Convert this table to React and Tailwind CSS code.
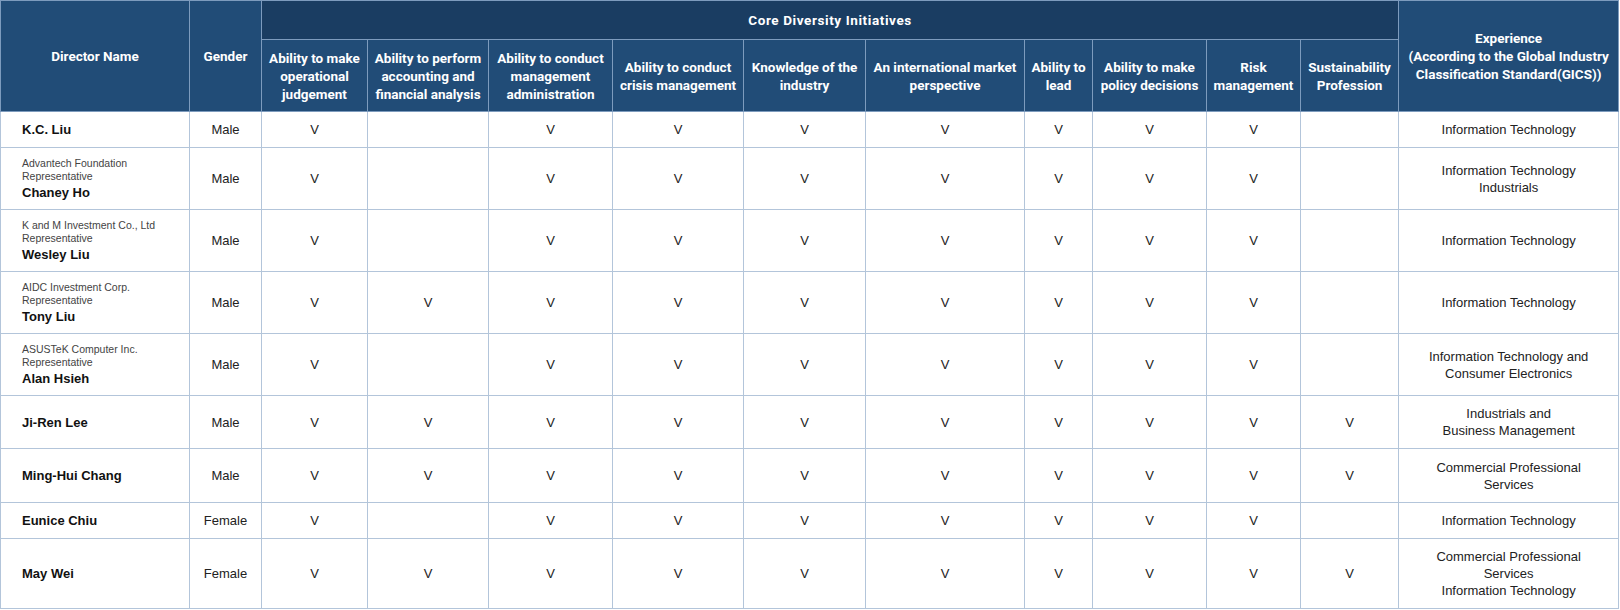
const skills = [
  'Ability to make operational judgement',
  'Ability to perform accounting and financial analysis',
  'Ability to conduct management administration',
  'Ability to conduct crisis management',
  'Knowledge of the industry',
  'An international market perspective',
  'Ability to lead',
  'Ability to make policy decisions',
  'Risk management',
  'Sustainability Profession',
];

const widths = ['w-[106px]', 'w-[121px]', 'w-[124px]', 'w-[131px]', 'w-[122px]', 'w-[159px]', 'w-[68px]', 'w-[114px]', 'w-[94px]', 'w-[98px]'];

const skillLabels = [
  ['Ability to make', 'operational', 'judgement'],
  ['Ability to perform', 'accounting and', 'financial analysis'],
  ['Ability to conduct', 'management', 'administration'],
  ['Ability to conduct', 'crisis management'],
  ['Knowledge of the', 'industry'],
  ['An international market', 'perspective'],
  ['Ability to', 'lead'],
  ['Ability to make', 'policy decisions'],
  ['Risk', 'management'],
  ['Sustainability', 'Profession'],
];

const directors = [
  { name: 'K.C. Liu', gender: 'Male', marks: [1, 0, 1, 1, 1, 1, 1, 1, 1, 0], exp: ['Information Technology'], h: 'h-[36px]' },
  { rep: ['Advantech Foundation', 'Representative'], name: 'Chaney Ho', gender: 'Male', marks: [1, 0, 1, 1, 1, 1, 1, 1, 1, 0], exp: ['Information Technology', 'Industrials'], h: 'h-[62px]' },
  { rep: ['K and M Investment Co., Ltd', 'Representative'], name: 'Wesley Liu', gender: 'Male', marks: [1, 0, 1, 1, 1, 1, 1, 1, 1, 0], exp: ['Information Technology'], h: 'h-[62px]' },
  { rep: ['AIDC Investment Corp.', 'Representative'], name: 'Tony Liu', gender: 'Male', marks: [1, 1, 1, 1, 1, 1, 1, 1, 1, 0], exp: ['Information Technology'], h: 'h-[62px]' },
  { rep: ['ASUSTeK Computer Inc.', 'Representative'], name: 'Alan Hsieh', gender: 'Male', marks: [1, 0, 1, 1, 1, 1, 1, 1, 1, 0], exp: ['Information Technology and', 'Consumer Electronics'], h: 'h-[62px]' },
  { name: 'Ji-Ren Lee', gender: 'Male', marks: [1, 1, 1, 1, 1, 1, 1, 1, 1, 1], exp: ['Industrials and', 'Business Management'], h: 'h-[53px]' },
  { name: 'Ming-Hui Chang', gender: 'Male', marks: [1, 1, 1, 1, 1, 1, 1, 1, 1, 1], exp: ['Commercial Professional', 'Services'], h: 'h-[54px]' },
  { name: 'Eunice Chiu', gender: 'Female', marks: [1, 0, 1, 1, 1, 1, 1, 1, 1, 0], exp: ['Information Technology'], h: 'h-[36px]' },
  { name: 'May Wei', gender: 'Female', marks: [1, 1, 1, 1, 1, 1, 1, 1, 1, 1], exp: ['Commercial Professional', 'Services', 'Information Technology'], h: 'h-[70px]' },
];

const headCell = 'border border-[#7d9bbd] bg-[#214c77] text-white font-bold text-[13.5px] leading-[18px] text-center align-middle p-0';
const bodyCell = 'border border-[#b3c5da] text-center align-middle text-[13px] leading-[17px] text-[#222] p-0';

export default function App() {
  return (
    <div className="w-[1620px] h-[610px] bg-white">
      <table
        className="table-fixed border-collapse w-[1618px] font-['Liberation_Sans',Arial,sans-serif]"
        aria-label={skills.join(', ')}
      >
        <colgroup>
          <col className="w-[189px]" />
          <col className="w-[72px]" />
          {widths.map((w, i) => (
            <col key={i} className={w} />
          ))}
          <col className="w-[220px]" />
        </colgroup>
        <thead className="font-['Roboto',Arial,sans-serif]">
          <tr className="h-[39px]">
            <th rowSpan={2} className={headCell}>Director Name</th>
            <th rowSpan={2} className={headCell}>Gender</th>
            <th colSpan={10} className={`${headCell} !bg-[#1a3d62]`}>
              <span className="tracking-[0.6px]">Core Diversity Initiatives</span>
            </th>
            <th rowSpan={2} className={headCell}>
              Experience
              <br />
              (According to the Global Industry
              <br />
              Classification Standard(GICS))
            </th>
          </tr>
          <tr className="h-[72px]">
            {skillLabels.map((lines, i) => (
              <th key={i} className={headCell}>
                {lines.map((l, j) => (
                  <div key={j}>{l}</div>
                ))}
              </th>
            ))}
          </tr>
        </thead>
        <tbody>
          {directors.map((d) => (
            <tr key={d.name} className={d.h}>
              <td className={`${bodyCell} !text-left pl-[21px]`}>
                {d.rep && (
                  <div className="text-[10.5px] leading-[13px] text-[#444]">
                    {d.rep.map((r) => (
                      <div key={r}>{r}</div>
                    ))}
                  </div>
                )}
                <div className={`font-bold text-[#111] ${d.rep ? 'mt-[1px]' : ''}`}>{d.name}</div>
              </td>
              <td className={bodyCell}>{d.gender}</td>
              {d.marks.map((m, i) => (
                <td key={i} className={bodyCell}>{m ? 'V' : ''}</td>
              ))}
              <td className={bodyCell}>
                {d.exp.map((e) => (
                  <div key={e}>{e}</div>
                ))}
              </td>
            </tr>
          ))}
        </tbody>
      </table>
    </div>
  );
}
